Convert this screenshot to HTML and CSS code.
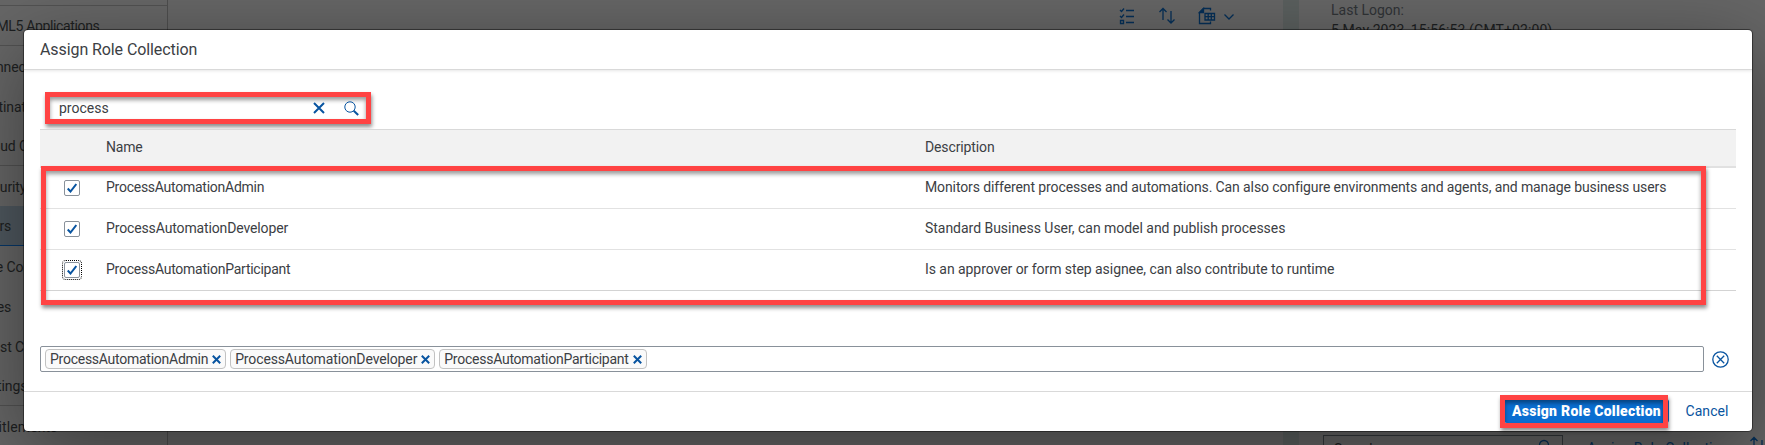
FILE: index.html
```html
<!DOCTYPE html>
<html lang="en"><head><meta charset="utf-8"><title>Assign Role Collection</title><link rel="stylesheet" href="styles.css"></head>
<body>
<div class="backdrop">
  <nav class="side">
    <div class="nav-item first line"></div>
    <div class="nav-item line"><span class="nav-text html5">HTML5 Applications</span></div>
    <div class="nav-item"><span class="nav-text conn">Connectivity</span></div>
    <div class="nav-item"><span class="nav-text dest">Destinations</span></div>
    <div class="nav-item line"><span class="nav-text cloud">Cloud Connectors</span></div>
    <div class="nav-item"><span class="nav-text sec">Security</span></div>
    <div class="nav-item selected"><span class="nav-text users">Users</span></div>
    <div class="nav-item"><span class="nav-text role">Role Collections</span></div>
    <div class="nav-item"><span class="nav-text roles">Roles</span></div>
    <div class="nav-item"><span class="nav-text trust">Trust Configuration</span></div>
    <div class="nav-item line"><span class="nav-text settings">Settings</span></div>
    <div class="nav-item"><span class="nav-text ent">Entitlements</span></div>
  </nav>
  <main class="center">
    <div class="tools">
      <svg width="16" height="18" viewBox="0 0 16 18"><path d="M1 3l1.500 1.500L5 1.500M1 9l1.500 1.500L5 7.500M7 3.500h8M7 9.500h8M7 15.500h8M1.500 13.500h3v3h-3z"/></svg>
      <svg width="18" height="18" viewBox="0 0 18 18"><path d="M5 13V1.500M1.500 5L5 1.500 8.500 5M13 4v12M9.500 12.500L13 16l3.500-3.500"/></svg>
      <svg class="sheet" width="18" height="18" viewBox="0 0 18 18"><path d="M12.500 3.500V1.500H5.500L1.500 5.500V16.500h11V14.500"/><path class="fold" d="M1.500 5.500h4v-4z"/><path d="M7 6.500h9.500v6.500H7zM7 9.700h9.500M10.200 6.500V13M13.300 6.500V13"/></svg>
      <svg class="down" width="10" height="6" viewBox="0 0 10 6"><path d="M.5.5L5 5 9.500.5"/></svg>
    </div>
  </main>
  <aside class="detail">
    <div class="logon"><span class="logon-label">Last Logon:</span><span class="logon-date">5 May 2023, 15:56:53 (GMT+02:00)</span></div>
    <div class="detail-tools">
      <div class="search-box"><span>Search</span><svg width="14" height="14" viewBox="0 0 14 14"><circle cx="6" cy="6" r="4.500"/><path d="M9.500 9.500L13 13"/></svg></div>
      <span class="bg-link">Assign Role Collection</span>
      <svg class="sort" width="18" height="18" viewBox="0 0 18 18"><path d="M5 13V1.500M1.500 5L5 1.500 8.500 5M13 4v12M9.500 12.500L13 16l3.500-3.500"/></svg>
    </div>
  </aside>
</div>
<section class="dialog">
  <header class="title"><span class="t-title">Assign Role Collection</span></header>
  <div class="content">
    <div class="search mark">
      <span class="t-process">process</span>
      <svg class="clear" width="12" height="12" viewBox="0 0 12 12"><path d="M1 1l10 10M11 1L1 11"/></svg>
      <svg class="find" width="15" height="15" viewBox="0 0 15 15"><circle cx="6" cy="6" r="5.200"/><path class="thick" d="M9.700 9.700l4.500 4.300"/></svg>
    </div>
    <div class="table">
      <div class="row head"><span></span><span class="cell t-name">Name</span><span class="cell t-desc">Description</span></div>
      <div class="row"><span class="box"><svg width="10" height="10" viewBox="0 0 10 10"><path d="M.7 5.500L3.500 8.500 9.300 1"/></svg></span><span class="cell t-admin">ProcessAutomationAdmin</span><span class="cell t-d1">Monitors different processes and automations. Can also configure environments and agents, and manage business users</span></div>
      <div class="row"><span class="box"><svg width="10" height="10" viewBox="0 0 10 10"><path d="M.7 5.500L3.500 8.500 9.300 1"/></svg></span><span class="cell t-dev">ProcessAutomationDeveloper</span><span class="cell t-d2">Standard Business User, can model and publish processes</span></div>
      <div class="row last"><span class="box focus"><svg width="10" height="10" viewBox="0 0 10 10"><path d="M.7 5.500L3.500 8.500 9.300 1"/></svg></span><span class="cell t-part">ProcessAutomationParticipant</span><span class="cell t-d3">Is an approver or form step asignee, can also contribute to runtime</span></div>
      <div class="mark rows-mark"></div>
    </div>
    <div class="selection">
      <div class="tokens">
        <div class="token"><span class="t-admin">ProcessAutomationAdmin</span><svg width="9" height="9" viewBox="0 0 9 9"><path d="M.8.8l7.400 7.400M8.200.8L.8 8.200"/></svg></div>
        <div class="token"><span class="t-dev">ProcessAutomationDeveloper</span><svg width="9" height="9" viewBox="0 0 9 9"><path d="M.8.8l7.400 7.400M8.200.8L.8 8.200"/></svg></div>
        <div class="token"><span class="t-part">ProcessAutomationParticipant</span><svg width="9" height="9" viewBox="0 0 9 9"><path d="M.8.8l7.400 7.400M8.200.8L.8 8.200"/></svg></div>
      </div>
      <svg class="reset" width="17" height="17" viewBox="0 0 17 17"><circle cx="8.500" cy="8.500" r="7.700"/><path d="M4.800 4.800l7.400 7.400M12.200 4.800l-7.400 7.400"/></svg>
    </div>
  </div>
  <footer class="footer">
    <button class="primary"><span class="t-assign">Assign Role Collection</span></button>
    <button class="cancel"><span class="t-cancel">Cancel</span></button>
    <div class="mark button-mark"></div>
  </footer>
</section>
</body></html>
```
FILE: styles.css
```css
* { box-sizing: border-box; }
body { margin: 0; width: 1765px; height: 445px; overflow: hidden; position: relative; font: 14px/20px Roboto, "Noto Sans", sans-serif; color: #3c4044; }
svg { display: block; fill: none; stroke: #0854a0; flex: none; }
span { white-space: nowrap; }

.backdrop { width: 1765px; height: 445px; display: flex; background: #666; color: #1d1f21; overflow: hidden; }
.backdrop svg { stroke: #052f57; stroke-width: 1.300; }
.side { width: 168px; flex: none; border-right: 1px solid #4e4e4e; overflow: hidden; }
.nav-item { height: 40px; display: flex; align-items: center; padding-top: 1px; }
.nav-item.first { height: 6px; }
.line { border-bottom: 1px solid #525252; }
.nav-text { flex: none; letter-spacing: -.1px; }
.selected { background: #4f585f; border-bottom: 1px solid #053769; }
.html5 { margin-left: -21px; letter-spacing: -.35px; }
.conn { margin-left: -21px; }
.dest { margin-left: -25px; }
.cloud { margin-left: -20px; }
.sec { margin-left: -23px; }
.users { margin-left: -24px; }
.role { margin-left: -24px; }
.roles { margin-left: -23px; }
.trust { margin-left: -20px; }
.settings { margin-left: -23px; }
.ent { margin-left: -22px; letter-spacing: .1px; }
.center { width: 1115px; flex: none; }
.tools { display: flex; padding: 7px 0 0 951px; }
.tools svg:nth-child(2) { margin-left: 23px; }
.fold { fill: #052f57; }
.tools .sheet { margin-left: 22px; }
.down { margin: 7px 0 0 8px; }
.detail { flex: 1; min-width: 0; border-left: 16px solid #5b605f; display: flex; flex-direction: column; justify-content: space-between; }
.logon { display: flex; flex-direction: column; padding-left: 32px; }
.logon-label { color: #303336; }
.logon-date { letter-spacing: .08px; }
.detail-tools { height: 10px; display: flex; padding-left: 24px; }
.search-box { height: 26px; width: 240px; border: 1px solid #35393c; display: flex; justify-content: space-between; padding: 3px 10px; flex: none; }
.bg-link { color: #052f57; margin: 3px 0 0 24px; letter-spacing: .1px; }
.sort { margin: 1px 0 0 20px; }

.dialog { position: absolute; left: 24px; top: 30px; width: 1728px; height: 401px; background: #fff; border-radius: 4px; box-shadow: 0 0 0 1px rgba(0,0,0,.42), 0 20px 80px rgba(0,0,0,.42); display: flex; flex-direction: column; }
.title { height: 40px; padding: 10px 16px 8px; border-bottom: 1px solid #d9d9d9; box-shadow: 0 1px 3px rgba(0,0,0,.1); font-size: 16px; }
.t-title { letter-spacing: -.09px; }
.content { flex: 1; padding: 22px 16px 0; }
.mark { border: 5px solid #ff4343; box-shadow: 1px 3px 4px rgba(0,0,0,.45), inset 0 3px 4px rgba(0,0,0,.4); }
.search { width: 326px; height: 32px; margin-left: 5px; display: flex; align-items: center; padding: 0 7px 0 9px; }
.clear { margin-left: auto; stroke-width: 2; }
.find { margin-left: 19px; }
.thick { stroke-width: 2; }
.table { position: relative; margin-top: 5px; border-top: 1px solid #d9d9d9; }
.row { display: grid; grid-template-columns: 66px 819px 1fr; align-items: center; height: 41px; border-bottom: 1px solid #e2e2e2; }
.cell { padding-bottom: 2px; }
.head { height: 38px; background: #f2f2f2; border-bottom: 2px solid #e1e1e1; }
.last { border-color: #d3d3d3; }
.t-name { letter-spacing: -.2px; }
.t-desc { letter-spacing: -.12px; }
.t-admin { letter-spacing: -.26px; }
.t-dev { letter-spacing: -.13px; }
.t-part { letter-spacing: -.25px; }
.t-d1 { letter-spacing: -.108px; }
.t-d2 { letter-spacing: -.03px; }
.t-d3 { letter-spacing: -.055px; }
.box { width: 16px; height: 16px; border: 1px solid #89919a; border-radius: 2px; margin-left: 24px; display: grid; place-items: center; }
.box svg { stroke-width: 2; }
.focus { outline: 1px dotted #000; outline-offset: 1px; }
.rows-mark { position: absolute; left: 1px; top: 36px; width: 1665px; height: 139px; }
.selection { display: flex; align-items: center; margin-top: 55px; }
.tokens { width: 1664px; height: 26px; border: 1px solid #89919a; border-radius: 2px; display: flex; align-items: center; gap: 4px; padding-left: 4px; }
.token { height: 20px; border: 1px solid #c2c2c2; border-radius: 4px; background: #fafafa; display: flex; align-items: center; padding: 0 4px; gap: 4px; }
.token svg { stroke-width: 2; }
.reset { margin-left: 8px; stroke-width: 1.300; }
.footer { height: 40px; border-top: 1px solid #d9d9d9; position: relative; display: flex; justify-content: flex-end; align-items: center; padding: 0 15px 1px 0; }
button { font: inherit; border: 0; padding: 0; background: none; height: 24px; }
.primary { background: #0a6ed1; color: #fff; font-weight: 900; width: 165px; border-radius: 3px; }
.t-assign { letter-spacing: .26px; }
.cancel { color: #0854a0; width: 60px; margin-left: 8px; }
.t-cancel { letter-spacing: .05px; }
.button-mark { position: absolute; left: 1476px; top: 3px; width: 168px; height: 33px; }
```
